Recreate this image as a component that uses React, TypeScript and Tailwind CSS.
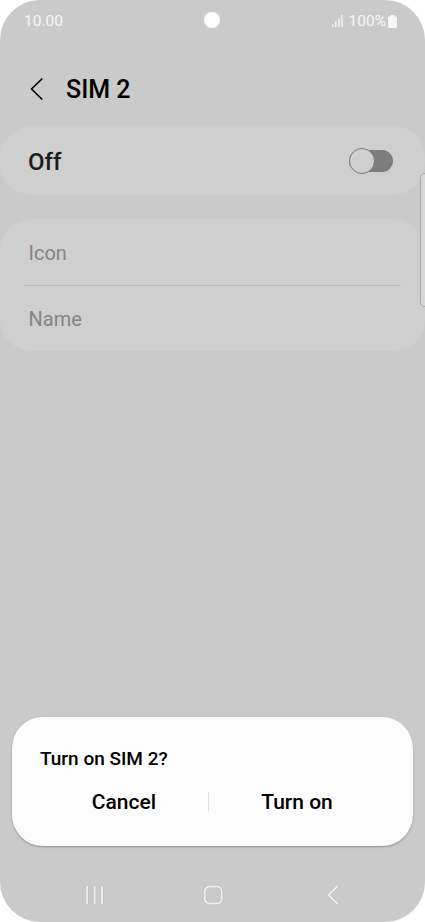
import { useState } from 'react';

function StatusBar() {
    return (
        <div className="relative flex h-[42px] shrink-0 items-center justify-between pl-[24px] pr-[28px] text-[15.5px] text-[#f7f7f7]">
            <span className="leading-[42px]">10.00</span>

            {/* Front camera */}
            <div className="absolute left-[204px] top-[12px] size-4 rounded-full bg-white" />

            <div className="flex items-center">
                <svg width="11" height="12" viewBox="0 0 11 12" fill="currentColor" className="mr-[6px]">
                    <rect x="0" y="9.5" width="1.4" height="2.5" />
                    <rect x="3.1" y="6.5" width="1.4" height="5.5" />
                    <rect x="6.2" y="3.5" width="1.4" height="8.5" />
                    <rect x="9.3" y="0" width="1.4" height="12" />
                </svg>
                <span className="mr-[2px] leading-[42px]">100%</span>
                <svg width="9" height="13" viewBox="0 0 9 13" fill="currentColor">
                    <path d="M2.7 0h3.6v1.2h1.2A1.5 1.5 0 0 1 9 2.7v8.8A1.5 1.5 0 0 1 7.5 13h-6A1.5 1.5 0 0 1 0 11.5V2.7a1.5 1.5 0 0 1 1.5-1.5h1.2z" />
                </svg>
            </div>
        </div>
    );
}

function NavBar() {
    return (
        <div className="flex h-[56px] items-center pl-[85px] pt-px text-[#eeeeee]">
            <button title="Recents">
                <svg width="20" height="22" viewBox="0 0 20 22" fill="currentColor" stroke="#b8b8b8" strokeWidth="0.7">
                    <rect x="0.7" y="1.7" width="2.8" height="18.6" rx="0.8" />
                    <rect x="8.2" y="1.7" width="2.8" height="18.6" rx="0.8" />
                    <rect x="15.7" y="1.7" width="2.8" height="18.6" rx="0.8" />
                </svg>
            </button>
            <button title="Home" className="ml-[97px]">
                <svg width="22" height="22" viewBox="0 0 22 22" fill="none">
                    <rect x="2.7" y="2.5" width="17" height="17" rx="5" stroke="#b8b8b8" strokeWidth="3" />
                    <rect x="2.7" y="2.5" width="17" height="17" rx="5" stroke="currentColor" strokeWidth="1.9" />
                </svg>
            </button>
            <button title="Back" className="ml-[102px]">
                <svg width="14" height="22" viewBox="0 0 14 22" fill="none">
                    <path d="M11.7 2L2.5 11l9.2 9" stroke="#b8b8b8" strokeWidth="3" />
                    <path d="M11.7 2L2.5 11l9.2 9" stroke="currentColor" strokeWidth="1.9" />
                </svg>
            </button>
        </div>
    );
}

export default function App() {
    const [enabled, setEnabled] = useState(false);
    const [dialogOpen, setDialogOpen] = useState(true);

    const handleTurnOn = () => {
        setEnabled(true);
        setDialogOpen(false);
    };

    return (
        <div className="h-[922px] w-[425px] overflow-hidden bg-white font-[Roboto,sans-serif] text-black">
            <div className="relative flex h-full flex-col overflow-hidden rounded-[40px] bg-[#cacaca]">
                <StatusBar />

                <header className="flex h-[84px] shrink-0 items-center pl-[29px] pt-[10px]">
                    <button title="Back">
                        <svg width="16" height="24" viewBox="0 0 16 24" fill="none" stroke="currentColor" strokeWidth="1.7" strokeLinecap="round" strokeLinejoin="round">
                            <path d="M12.8 2L2.5 12l10.3 10" />
                        </svg>
                    </button>
                    <h1 className="ml-[21px] pt-[1px] text-[25px] font-medium leading-8">SIM 2</h1>
                </header>

                {/* SIM on/off */}
                <section className="flex h-[69px] shrink-0 items-center justify-between rounded-[32px] bg-[#cfcfcf] pl-[28px] pr-[32px]">
                    <span className="pt-[3px] text-[24px] font-medium leading-8 text-[#1c1c1c]">{enabled ? 'On' : 'Off'}</span>
                    <button
                        title="Toggle SIM"
                        onClick={() => (enabled ? setEnabled(false) : setDialogOpen(true))}
                        className={`flex h-[22px] w-[44px] items-center rounded-full bg-[#7d7d7d] ${enabled ? 'justify-end' : ''}`}
                    >
                        <span className="size-[26px] shrink-0 rounded-full border border-[#7d7d7d] bg-[#cfcfcf]" />
                    </button>
                </section>

                {/* SIM details */}
                <section className="mt-6 h-[132px] shrink-0 rounded-[32px] bg-[#cfcfcf] px-6 text-[20px] text-[#858585]">
                    <div className="flex h-[67px] items-center border-b border-[#bcbcbc] pl-[4.5px] pt-[2px]">Icon</div>
                    <div className="flex h-[65px] items-center pl-[4.5px]">Name</div>
                </section>

                {/* Edge panel handle */}
                <div className="absolute -right-2 top-[173px] h-[134px] w-[13px] rounded-[5px] border border-[#a8a8a8] bg-[#d7d7d7]" />

                <div className="mt-auto shrink-0">
                    {dialogOpen && (
                        <div className="mx-3 mb-5 h-[129.5px] rounded-[31px] bg-[#fcfcfc] pt-[29px] shadow-[0_1px_2px_rgba(0,0,0,0.3)]">
                            <p className="pl-[28px] text-[19px] font-medium leading-[26px]">Turn on SIM 2?</p>
                            <div className="mt-[16px] flex items-center text-[21px] font-medium leading-[28px]">
                                <button className="w-[196px] pl-[28px]" onClick={() => setDialogOpen(false)}>
                                    Cancel
                                </button>
                                <div className="h-[19px] w-px bg-[#e2e2e2]" />
                                <button className="w-[204px] pr-[28px]" onClick={handleTurnOn}>
                                    Turn on
                                </button>
                            </div>
                        </div>
                    )}
                    <NavBar />
                </div>
            </div>
        </div>
    );
}
